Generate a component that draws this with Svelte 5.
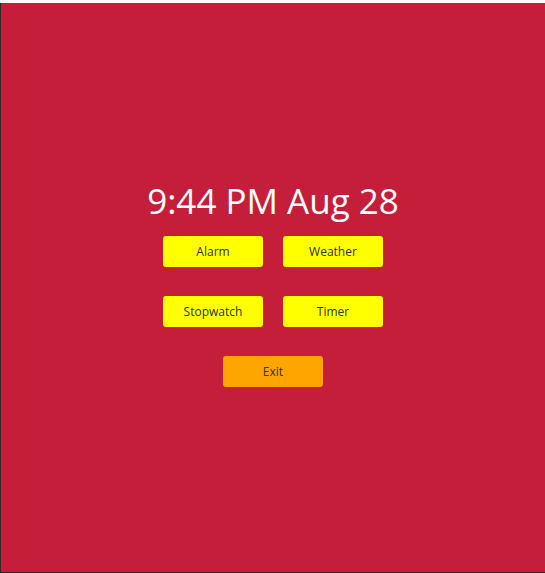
<script>
  const time = '9:44 PM Aug 28';
  const tools = ['Alarm', 'Weather', 'Stopwatch', 'Timer'];
</script>

<main>
  <h1>{time}</h1>
  <nav aria-label="Clock tools">
    {#each tools as tool}
      <button type="button">{tool}</button>
    {/each}
  </nav>
  <button type="button" class="exit">Exit</button>
</main>

<style>
  :global(body) {
    margin: 0;
    background: #fff;
  }

  main {
    box-sizing: border-box;
    min-height: calc(100vh - 3px);
    margin-top: 3px;
    padding-bottom: 12px;
    display: flex;
    flex-direction: column;
    align-items: center;
    justify-content: center;
    background: #c41e3a;
    border-left: 1px solid #2b2b2b;
    border-bottom: 1px solid #2b2b2b;
    font-family: 'Segoe UI', 'Open Sans', 'Noto Sans', sans-serif;
  }

  :global(#app) {
    display: flow-root;
  }

  h1 {
    margin: 0 0 10px;
    color: #fff;
    font-size: 35px;
    font-weight: 400;
    line-height: 50px;
    white-space: nowrap;
  }

  nav {
    display: grid;
    grid-template-columns: 100px 100px;
    gap: 29px 20px;
    margin-bottom: 29px;
  }

  button {
    width: 100px;
    height: 31px;
    padding: 0;
    border: 0;
    border-radius: 3px;
    background: #ff0;
    color: #333;
    font-family: inherit;
    font-size: 12px;
    line-height: 16px;
  }

  .exit {
    background: #ffa500;
  }
</style>
